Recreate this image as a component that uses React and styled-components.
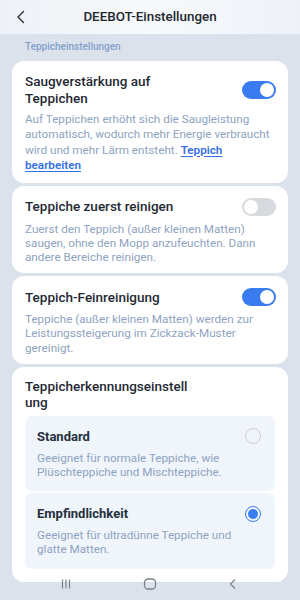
import React, { useState } from "react";
import styled, { createGlobalStyle } from "styled-components";

const GlobalStyle = createGlobalStyle`
  html, body {
    margin: 0;
    padding: 0;
    background: #dbe2eb;
    font-family: Roboto, "Noto Sans", Arial, sans-serif;
    overflow: hidden;
  }
  * { box-sizing: border-box; }
`;

const Page = styled.div`
  width: 300px;
  height: 600px;
  background: #dbe2eb;
  position: relative;
  overflow: hidden;
`;

const Header = styled.div`
  height: 34px;
  display: flex;
  align-items: center;
  justify-content: center;
  position: relative;
  background: linear-gradient(90deg, #eef1f6 0%, #f7f9fc 50%, #eef2f7 100%);
`;

const BackButton = styled.button`
  position: absolute;
  left: 12px;
  top: 8px;
  width: 18px;
  height: 18px;
  padding: 0;
  border: none;
  background: none;
  display: flex;
  align-items: center;
  justify-content: center;
`;

const HeaderTitle = styled.div`
  font-size: 13.4px;
  font-weight: 500;
  color: #22272e;
  margin-top: -2px;
`;

const SectionLabel = styled.div`
  font-size: 10px;
  font-weight: 500;
  color: #82a0cb;
  padding: 7px 25px 0;
  height: 27px;
  line-height: 12px;
`;

const List = styled.div`
  display: flex;
  flex-direction: column;
  gap: 3px;
  padding: 0 12px;
`;

const Card = styled.div`
  background: #ffffff;
  border-radius: 12px;
  padding: ${(p) => p.$padding || "12px 12px 9px 13px"};
`;

const Row = styled.div`
  display: flex;
  align-items: center;
  justify-content: space-between;
`;

const Title = styled.div`
  max-width: 167px;
  font-size: 13.5px;
  font-weight: 500;
  line-height: ${(p) => p.$lh || "17px"};
  color: #1f2935;
  overflow-wrap: anywhere;
`;

const Desc = styled.div`
  margin-top: ${(p) => p.$gap || "6px"};
  font-size: 11.7px;
  line-height: ${(p) => p.$lh || "14.2px"};
  color: #8ea3c0;
`;

const Link = styled.a`
  color: #3670e2;
  font-weight: 600;
  text-decoration: underline;
  text-underline-offset: 2px;
`;

const Track = styled.button`
  flex: none;
  width: 34px;
  height: 18px;
  border-radius: 9px;
  border: none;
  padding: 0;
  position: relative;
  background: ${(p) => (p.$on ? "#3b7bf0" : "#d7dade")};
  cursor: pointer;
`;

const Knob = styled.span`
  position: absolute;
  top: 2px;
  left: ${(p) => (p.$on ? "18px" : "2px")};
  width: 14px;
  height: 14px;
  border-radius: 50%;
  background: #ffffff;
`;

const Options = styled.div`
  margin-top: 6px;
  display: flex;
  flex-direction: column;
  gap: 2px;
`;

const Option = styled.div`
  background: #f0f5fc;
  border-radius: 7px;
  padding: 12px 13px 12px 12px;
  cursor: pointer;
`;

const OptionTitle = styled.div`
  font-size: 13px;
  font-weight: 700;
  line-height: 17px;
  color: #25303c;
`;

const Radio = styled.span`
  flex: none;
  width: 16px;
  height: 16px;
  border-radius: 50%;
  border: 1.3px solid ${(p) => (p.$checked ? "#3b7bf0" : "#cdd1d6")};
  display: flex;
  align-items: center;
  justify-content: center;
  margin-right: 1px;
  &::after {
    content: "";
    width: 10px;
    height: 10px;
    border-radius: 50%;
    background: ${(p) => (p.$checked ? "#3b7bf0" : "transparent")};
  }
`;

const NavBar = styled.div`
  position: fixed;
  left: 0;
  bottom: 0;
  width: 300px;
  height: 34px;
  display: flex;
  align-items: center;
  justify-content: space-between;
  padding: 0 60px 0 59px;
`;

const NavIcon = styled.span`
  width: 14px;
  height: 14px;
  display: flex;
  align-items: center;
  justify-content: center;
  margin-top: 1px;
`;

const Toggle = ({ on, onClick }) => (
  <Track $on={on} onClick={onClick}>
    <Knob $on={on} />
  </Track>
);

const options = [
  {
    id: "standard",
    title: "Standard",
    desc: "Geeignet für normale Teppiche, wie Plüschteppiche und Mischteppiche.",
  },
  {
    id: "sensitive",
    title: "Empfindlichkeit",
    desc: "Geeignet für ultradünne Teppiche und glatte Matten.",
  },
];

export default function App() {
  const [boost, setBoost] = useState(true);
  const [first, setFirst] = useState(false);
  const [fine, setFine] = useState(true);
  const [mode, setMode] = useState("sensitive");

  return (
    <Page>
      <GlobalStyle />
      <Header>
        <BackButton>
          <svg width="10" height="14" viewBox="0 0 10 14" fill="none">
            <path d="M7.5 1.5 L2 7 L7.5 12.5" stroke="#2a2f36" strokeWidth="1.4" strokeLinecap="round" strokeLinejoin="round" />
          </svg>
        </BackButton>
        <HeaderTitle>DEEBOT-Einstellungen</HeaderTitle>
      </Header>
      <SectionLabel>Teppicheinstellungen</SectionLabel>
      <List>
        <Card>
          <Row>
            <Title>Saugverstärkung auf Teppichen</Title>
            <Toggle on={boost} onClick={() => setBoost(!boost)} />
          </Row>
          <Desc $lh="15.4px" $gap="5px">
            Auf Teppichen erhöht sich die Saugleistung automatisch, wodurch mehr Energie verbraucht wird und mehr Lärm entsteht. <Link>Teppich bearbeiten</Link>
          </Desc>
        </Card>
        <Card>
          <Row>
            <Title>Teppiche zuerst reinigen</Title>
            <Toggle on={first} onClick={() => setFirst(!first)} />
          </Row>
          <Desc>
            Zuerst den Teppich (außer kleinen Matten) saugen, ohne den Mopp anzufeuchten. Dann andere Bereiche reinigen.
          </Desc>
        </Card>
        <Card>
          <Row>
            <Title>Teppich-Feinreinigung</Title>
            <Toggle on={fine} onClick={() => setFine(!fine)} />
          </Row>
          <Desc>
            Teppiche (außer kleinen Matten) werden zur Leistungssteigerung im Zickzack-Muster gereinigt.
          </Desc>
        </Card>
        <Card $padding="11px 13px 13px 13px">
          <Title $lh="16px">Teppicherkennungseinstellung</Title>
          <Options>
            {options.map((o) => (
              <Option key={o.id} onClick={() => setMode(o.id)}>
                <Row>
                  <OptionTitle>{o.title}</OptionTitle>
                  <Radio $checked={mode === o.id} />
                </Row>
                <Desc>{o.desc}</Desc>
              </Option>
            ))}
          </Options>
        </Card>
      </List>
      <NavBar>
        <NavIcon>
          <svg width="12" height="12" viewBox="0 0 12 12">
            <path d="M2.5 1.5 V10.5 M6 1.5 V10.5 M9.5 1.5 V10.5" stroke="#7b8089" strokeWidth="1.2" />
          </svg>
        </NavIcon>
        <NavIcon>
          <svg width="14" height="14" viewBox="0 0 14 14">
            <rect x="1.5" y="2" width="11" height="10" rx="3.5" fill="none" stroke="#7b8089" strokeWidth="1.3" />
          </svg>
        </NavIcon>
        <NavIcon>
          <svg width="10" height="12" viewBox="0 0 10 12">
            <path d="M7 1.5 L2.5 6 L7 10.5" fill="none" stroke="#7b8089" strokeWidth="1.2" />
          </svg>
        </NavIcon>
      </NavBar>
    </Page>
  );
}
